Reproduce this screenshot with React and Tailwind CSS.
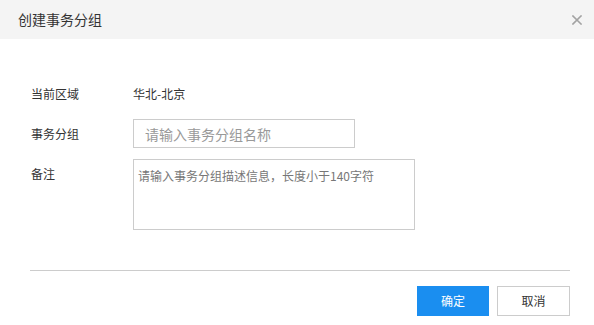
export default function App() {
  const font = { fontFamily: '"Microsoft YaHei", "Noto Sans CJK SC", "Noto Sans", sans-serif' };
  return (
    <div className="w-[594px] h-[325px] bg-white flex flex-col text-[#333]" style={font}>
      <div className="h-[39px] bg-[#f4f4f4] flex items-center justify-between pl-[18px] pr-[12px] shrink-0">
        <span className="text-[14px] text-[#333]">创建事务分组</span>
        <svg width="10" height="10" viewBox="0 0 10 10" className="block">
          <path d="M1 1L9 9M9 1L1 9" stroke="#a3a3a3" strokeWidth="1.6" strokeLinecap="square" />
        </svg>
      </div>
      <div className="flex flex-col pl-[31px] pt-[41px]">
        <div className="flex items-center h-[28px]">
          <span className="w-[102px] text-[12px]">当前区域</span>
          <span className="text-[12px]">华北-北京</span>
        </div>
        <div className="flex items-center mt-[11px]">
          <span className="w-[102px] text-[12px]">事务分组</span>
          <input
            className="w-[222px] h-[29px] box-border border border-[#cccccc] pl-[11px] text-[14px] outline-none placeholder:text-[#999]"
            placeholder="请输入事务分组名称"
          />
        </div>
        <div className="flex items-start mt-[11px]">
          <span className="w-[102px] text-[12px] leading-[18px] pt-[6px]">备注</span>
          <textarea
            className="w-[282px] h-[71px] box-border border border-[#cccccc] px-[4px] pt-[7px] text-[12px] leading-[18px] resize-none outline-none placeholder:text-[#777]"
            placeholder="请输入事务分组描述信息，长度小于140字符"
          />
        </div>
      </div>
      <div className="ml-[30px] mr-[24px] mt-[40px] h-px bg-[#cccccc]" />
      <div className="flex justify-end gap-[8px] mr-[24px] mt-[15px]">
        <button className="w-[72px] h-[30px] bg-[#1a8ef0] text-white text-[12px]">确定</button>
        <button className="w-[73px] h-[30px] box-border border border-[#cccccc] bg-white text-[#333] text-[12px]">取消</button>
      </div>
    </div>
  );
}
